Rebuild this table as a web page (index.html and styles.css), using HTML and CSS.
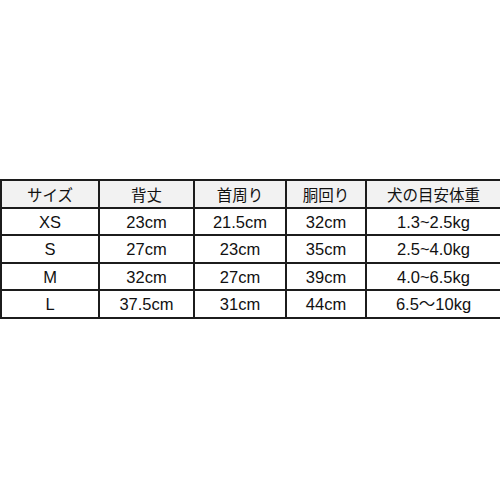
FILE: index.html
```html
<!DOCTYPE html>
<html lang="ja">
<head>
<meta charset="utf-8">
<link rel="stylesheet" href="styles.css">
</head>
<body>
<table class="size-table">
  <colgroup>
    <col class="c1"><col class="c2"><col class="c3"><col class="c4"><col class="c5">
  </colgroup>
  <thead>
    <tr><th>サイズ</th><th>背丈</th><th>首周り</th><th>胴回り</th><th>犬の目安体重</th></tr>
  </thead>
  <tbody>
    <tr><td>XS</td><td>23cm</td><td>21.5cm</td><td>32cm</td><td>1.3~2.5kg</td></tr>
    <tr><td>S</td><td>27cm</td><td>23cm</td><td>35cm</td><td>2.5~4.0kg</td></tr>
    <tr><td>M</td><td>32cm</td><td>27cm</td><td>39cm</td><td>4.0~6.5kg</td></tr>
    <tr><td>L</td><td>37.5cm</td><td>31cm</td><td>44cm</td><td>6.5～10kg</td></tr>
  </tbody>
</table>
</body>
</html>
```
FILE: styles.css
```css
html, body {
  margin: 0;
  padding: 0;
  background: #ffffff;
}
body {
  padding-top: 179px;
  font-family: "Liberation Sans", Arial, "Noto Sans CJK JP", sans-serif;
  color: #111;
}
.size-table {
  width: 500px;
  border-collapse: collapse;
  table-layout: fixed;
}
.c1 { width: 98px; }
.c2 { width: 95px; }
.c3 { width: 92px; }
.c4 { width: 80px; }
.c5 { width: 135px; }
.size-table th,
.size-table td {
  border: 2px solid #1c1c1c;
  height: 24.5px;
  padding: 1px 0 0;
  text-align: center;
  vertical-align: middle;
  font-size: 16.5px;
  font-weight: normal;
  line-height: 18px;
}
.size-table th {
  background: #f2f2f2;
  font-family: "Noto Sans CJK JP", sans-serif;
  font-size: 15.5px;
}
```
